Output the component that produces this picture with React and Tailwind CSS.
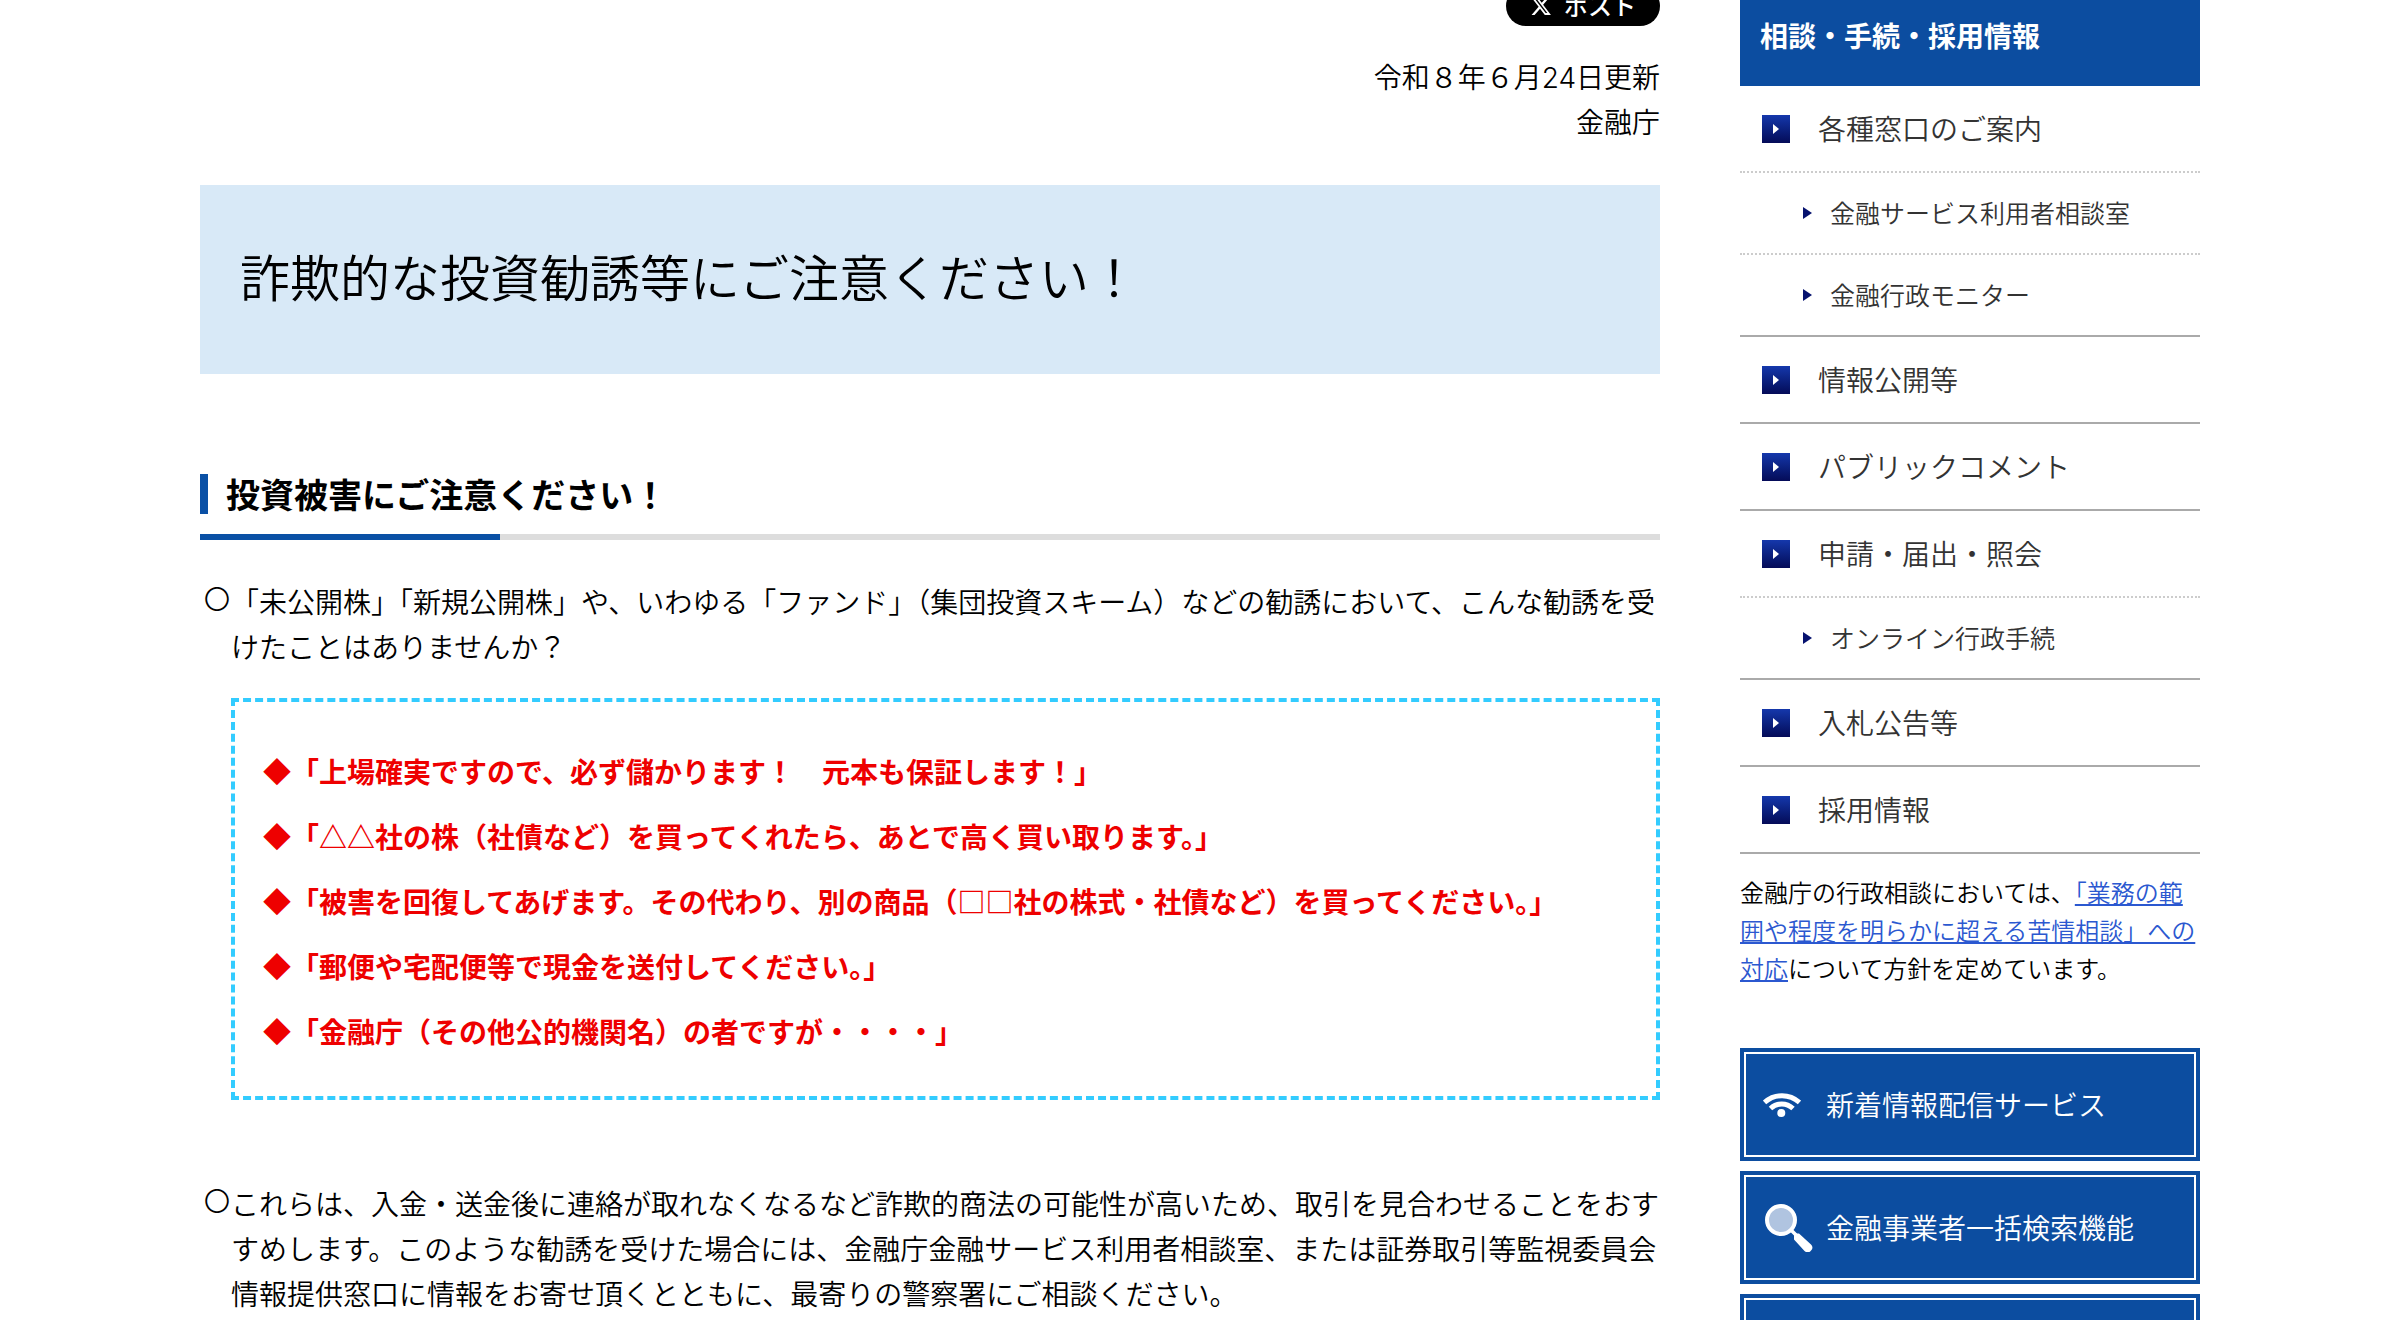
import React from 'react';

const menu = [
  {
    label: '各種窓口のご案内',
    children: ['金融サービス利用者相談室', '金融行政モニター'],
  },
  { label: '情報公開等' },
  { label: 'パブリックコメント' },
  { label: '申請・届出・照会', children: ['オンライン行政手続'] },
  { label: '入札公告等' },
  { label: '採用情報' },
];

const phrases = [
  '◆「上場確実ですので、必ず儲かります！　元本も保証します！」',
  '◆「△△社の株（社債など）を買ってくれたら、あとで高く買い取ります。」',
  '◆「被害を回復してあげます。その代わり、別の商品（□□社の株式・社債など）を買ってください。」',
  '◆「郵便や宅配便等で現金を送付してください。」',
  '◆「金融庁（その他公的機関名）の者ですが・・・・」',
];

function XLogo() {
  return (
    <svg viewBox="0 0 24 24" className="h-[22px] w-[22px]" fill="currentColor" aria-hidden="true">
      <path d="M18.244 2.25h3.308l-7.227 8.26 8.502 11.24H16.17l-5.214-6.817L4.99 21.75H1.68l7.73-8.835L1.254 2.25H8.08l4.713 6.231zm-1.161 17.52h1.833L7.084 4.126H5.117z" />
    </svg>
  );
}

function SquareArrow() {
  return (
    <span className="flex h-7 w-7 shrink-0 items-center bg-linear-to-b from-[#1538ac] to-[#050b58] pl-[11px]">
      <svg viewBox="0 0 6 10" className="h-[10px] w-[6px]" fill="#fff" aria-hidden="true">
        <path d="M0 0L6 5L0 10Z" />
      </svg>
    </span>
  );
}

function SmallArrow() {
  return (
    <svg viewBox="0 0 9 12" className="h-3 w-[9px] shrink-0" fill="#06126f" aria-hidden="true">
      <path d="M0 0L9 6L0 12Z" />
    </svg>
  );
}

function WifiIcon() {
  return (
    <svg viewBox="0 0 38 24" className="h-6 w-[38px]" aria-hidden="true">
      <g fill="none" stroke="#fff" strokeWidth="5">
        <path d="M1.500 9.500C11.500 .4 26.500 .4 36.500 9.500" />
        <path d="M7.500 15.500C14 9.400 23.500 9.400 30 15.500" />
      </g>
      <circle cx="18.300" cy="20" r="4" fill="#fff" />
    </svg>
  );
}

function SearchIcon() {
  return (
    <svg viewBox="0 0 50 48" className="h-12 w-[50px]" aria-hidden="true">
      <circle cx="18" cy="16" r="14" fill="#b0c4e0" stroke="#fff" strokeWidth="4" />
      <path d="M27 25L33 31" stroke="#fff" strokeWidth="3.500" />
      <path d="M31 29.500L36 29.500L48 40.500A4.600 4.600 0 0 1 41.500 47L31 35.500Z" fill="#fff" />
    </svg>
  );
}

function Note({ children }) {
  return (
    <li className="flex">
      <span className="w-7 shrink-0 text-center text-[26px] leading-[38px]">〇</span>
      <div className="min-w-0 flex-1">{children}</div>
    </li>
  );
}

function BannerLink({ icon, children }) {
  return (
    <a href="#" className="block bg-[#0c4da0] p-1 text-white">
      <span className="flex h-[105px] items-center border-2 border-white pl-[17px]">
        <span className="flex w-[63px] shrink-0">{icon}</span>
        {children}
      </span>
    </a>
  );
}

function Sidebar() {
  return (
    <aside className="w-[460px] shrink-0">
      <h2 className="flex h-[86px] items-start bg-[#0c4da0] px-5 pt-[13px] font-bold text-white">相談・手続・採用情報</h2>
      <ul className="text-[#333]">
        {menu.map((item) => (
          <li key={item.label} className="border-b-2 border-[#aaa]">
            <a
              href="#"
              className={item.children ? 'flex h-[87px] items-center gap-7 border-b-2 border-dotted border-[#ccc] pl-[22px]' : 'flex h-[85px] items-center gap-7 pl-[22px]'}
            >
              <SquareArrow />
              {item.label}
            </a>
            {item.children && (
              <ul className="divide-y-2 divide-dotted divide-[#ccc] text-[25px]">
                {item.children.map((child) => (
                  <li key={child}>
                    <a href="#" className="flex h-20 items-center gap-[18px] pl-[63px]">
                      <SmallArrow />
                      <span className="pb-[2px]">{child}</span>
                    </a>
                  </li>
                ))}
              </ul>
            )}
          </li>
        ))}
      </ul>
      <p className="mt-[19px] text-[24px] leading-[38px]">
        金融庁の行政相談においては、
        <a href="#" className="text-[#2b58d0] underline">「業務の範囲や程度を明らかに超える苦情相談」への対応</a>
        について方針を定めています。
      </p>
      <div className="mt-[61px] flex flex-col gap-[10px]">
        <BannerLink icon={<WifiIcon />}>新着情報配信サービス</BannerLink>
        <BannerLink icon={<SearchIcon />}>金融事業者一括検索機能</BannerLink>
        <BannerLink />
      </div>
    </aside>
  );
}

export default function App() {
  return (
    <div
      lang="ja"
      className="h-screen overflow-hidden bg-white font-['Noto_Sans_CJK_JP',sans-serif] text-[28px] leading-[45px] font-[350] text-black"
    >
      <div className="mx-auto flex max-w-[2000px] gap-20">
        <main className="min-w-0 flex-1">
          <div className="-mt-[14px] flex justify-end">
            <button type="button" className="flex h-10 items-center gap-3 rounded-full bg-black px-6 font-['Inter','Noto_Sans_CJK_JP',sans-serif] text-[24px] font-medium text-white">
              <XLogo />
              ポスト
            </button>
          </div>

          <p className="mt-[30px] text-right font-['Inter','Noto_Sans_CJK_JP',sans-serif]">
            令和８年６月24日更新
            <br />
            金融庁
          </p>

          <h1 className="mt-[39px] flex h-[189px] items-center bg-[#d8e9f7] px-10 font-['Inter','Noto_Sans_CJK_JP',sans-serif] text-[50px]">
            詐欺的な投資勧誘等にご注意ください！
          </h1>

          <div className="mt-[100px]">
            <h2 className="border-l-8 border-[#0a50a5] pl-[18px] text-[34px] leading-10 font-bold">
              投資被害にご注意ください！
            </h2>
            <div className="mt-5 h-[6px] bg-[#ddd]">
              <div className="h-full w-[300px] bg-[#0a50a5]" />
            </div>
          </div>

          <ul className="mt-[39px] flex flex-col gap-[81px] pl-[3px]">
            <Note>
              <p>
                「未公開株」「新規公開株」や、いわゆる「ファンド」（集団投資スキーム）などの勧誘において、こんな勧誘を受けたことはありませんか？
              </p>
              <div className="mt-[29px] flex flex-col gap-5 border-4 border-dashed border-[#3cf] px-7 pt-[47px] pb-[42px] font-bold text-[#e00]">
                {phrases.map((phrase) => (
                  <p key={phrase}>{phrase}</p>
                ))}
              </div>
            </Note>
            <Note>
              <p>
                これらは、入金・送金後に連絡が取れなくなるなど詐欺的商法の可能性が高いため、取引を見合わせることをおすすめします。このような勧誘を受けた場合には、金融庁金融サービス利用者相談室、または証券取引等監視委員会情報提供窓口に情報をお寄せ頂くとともに、最寄りの警察署にご相談ください。
              </p>
            </Note>
          </ul>
        </main>

        <Sidebar />
      </div>
    </div>
  );
}
